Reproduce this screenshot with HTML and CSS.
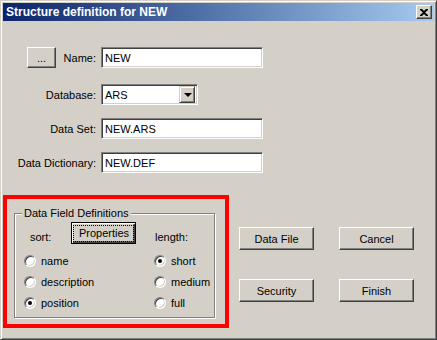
FILE: index.html
```html
<!DOCTYPE html>
<html lang="en">
<head>
    <meta charset="UTF-8">
    <title>Structure definition for NEW</title>
    <link rel="stylesheet" href="styles.css">
</head>
<body>
    <div class="window">
        <div class="titlebar">
            <span class="title">Structure definition for NEW</span>
            <span class="close">
                <svg width="8" height="7" viewBox="0 0 8 7"><path d="M0 0h2l2 2 2-2h2v1L5 3.5 8 6v1H6L4 5 2 7H0V6l3-2.5L0 1z" fill="#000"/></svg>
            </span>
        </div>

        <div class="fields">
            <div class="row">
                <div class="label"><button class="btn btn-dots">...</button><span>Name:</span></div>
                <div class="edit">NEW</div>
            </div>
            <div class="row row-db">
                <div class="label">Database:</div>
                <div class="combo">
                    <span class="combo-text">ARS</span>
                    <span class="combo-btn"><span class="arrow"></span></span>
                </div>
            </div>
            <div class="row row-next">
                <div class="label">Data Set:</div>
                <div class="edit">NEW.ARS</div>
            </div>
            <div class="row row-next">
                <div class="label">Data Dictionary:</div>
                <div class="edit">NEW.DEF</div>
            </div>
        </div>

        <div class="lower">
            <div class="highlight">
                <div class="group">
                    <div class="legend">Data Field Definitions</div>
                    <div class="group-head">
                        <span class="head-sort">sort:</span>
                        <button class="btn btn-default"><span class="focus">Properties</span></button>
                        <span class="head-length">length:</span>
                    </div>
                    <div class="radios">
                        <label class="radio"><span class="dot"></span>name</label>
                        <label class="radio"><span class="dot checked"></span>short</label>
                        <label class="radio"><span class="dot"></span>description</label>
                        <label class="radio"><span class="dot"></span>medium</label>
                        <label class="radio"><span class="dot checked"></span>position</label>
                        <label class="radio"><span class="dot"></span>full</label>
                    </div>
                </div>
            </div>

            <div class="actions">
                <button class="btn">Data File</button>
                <button class="btn">Cancel</button>
                <button class="btn">Security</button>
                <button class="btn">Finish</button>
            </div>
        </div>
    </div>
</body>
</html>
```

FILE: styles.css
```css
* {
    box-sizing: border-box;
}
body {
    margin: 0;
    font-family: "Liberation Sans", Arial, sans-serif;
    font-size: 11px;
    color: #000;
    background: #d4d0c8;
}
.window {
    width: 437px;
    height: 340px;
    background: #d4d0c8;
    border: 1px solid;
    border-color: #d4d0c8 #404040 #404040 #d4d0c8;
    box-shadow: inset 1px 1px #fff, inset -1px -1px #808080;
    padding: 2px;
}
.titlebar {
    height: 18px;
    display: flex;
    align-items: center;
    justify-content: space-between;
    background: linear-gradient(to right, #0a246a, #a6caf0);
    padding: 0 2px 0 3px;
}
.title {
    color: #fff;
    font-weight: bold;
    font-size: 12px;
}
.close {
    width: 16px;
    height: 14px;
    display: flex;
    align-items: center;
    justify-content: center;
    background: #d4d0c8;
    border: 1px solid;
    border-color: #fff #404040 #404040 #fff;
    box-shadow: inset -1px -1px #808080;
}

/* top fields */
.fields {
    margin-top: 26px;
}
.row {
    display: flex;
    align-items: center;
    height: 21px;
}
.row-db {
    margin-top: 16px;
}
.row-next {
    margin-top: 13px;
}
.label {
    width: 93px;
    margin-right: 5px;
    display: flex;
    align-items: center;
    justify-content: flex-end;
}
.edit, .combo {
    height: 21px;
    background: #fff;
    border: 1px solid;
    border-color: #808080 #fff #fff #808080;
    box-shadow: inset 1px 1px #404040, inset -1px -1px #d4d0c8;
    padding: 0 3px;
    display: flex;
    align-items: center;
}
.edit {
    width: 162px;
}
.combo {
    width: 97px;
    padding-right: 2px;
    justify-content: space-between;
}
.combo-btn {
    width: 16px;
    height: 17px;
    background: #d4d0c8;
    border: 1px solid;
    border-color: #d4d0c8 #404040 #404040 #d4d0c8;
    box-shadow: inset 1px 1px #fff, inset -1px -1px #808080;
    display: flex;
    align-items: center;
    justify-content: center;
}
.arrow {
    width: 0;
    height: 0;
    border-left: 4px solid transparent;
    border-right: 4px solid transparent;
    border-top: 4px solid #000;
    margin-left: 1px;
}

/* buttons */
.btn {
    font-family: inherit;
    font-size: 11px;
    color: #000;
    background: #d4d0c8;
    border: 1px solid;
    border-color: #fff #404040 #404040 #fff;
    box-shadow: inset -1px -1px #808080;
    padding: 0;
    border-radius: 0;
}
.btn-dots {
    width: 29px;
    height: 21px;
    margin-left: 24px;
    margin-right: auto;
}
.btn-default {
    width: 65px;
    height: 22px;
    border: 1px solid #000;
    box-shadow: inset 1px 1px #fff, inset -1px -1px #404040, inset -2px -2px #808080;
    display: flex;
    align-items: center;
    justify-content: center;
}
.focus {
    border: 1px dotted #000;
    padding: 1px 4px 1px 5px;
    line-height: 13px;
}

/* lower part */
.lower {
    display: flex;
    align-items: flex-start;
    margin-top: 22px;
}
.highlight {
    width: 226px;
    border: 4px solid #f00;
    padding: 14px 10px 6px 7px;
}
.group {
    height: 105px;
    border: 1px solid #808080;
    box-shadow: 1px 1px #fff, inset 1px 1px #fff;
}
.legend {
    width: fit-content;
    margin: -7px 0 0 7px;
    padding: 0 2px;
    line-height: 13px;
    background: #d4d0c8;
}
.group-head {
    display: flex;
    align-items: flex-end;
    margin-top: 2px;
    line-height: 13px;
}
.head-sort {
    width: 56px;
    padding-left: 15px;
}
.head-length {
    margin-left: 19px;
}
.radios {
    display: grid;
    grid-template-columns: 130px auto;
    grid-auto-rows: 21px;
    margin-top: 6px;
    padding-left: 9px;
}
.radio {
    display: flex;
    align-items: center;
}
.dot {
    width: 12px;
    height: 12px;
    margin-right: 5px;
    border-radius: 50%;
    background: #fff;
    border: 1px solid;
    border-color: #808080 #fff #fff #808080;
    box-shadow: inset 1px 1px #404040, inset -1px -1px #d4d0c8;
    display: flex;
    align-items: center;
    justify-content: center;
}
.dot.checked::after {
    content: "";
    width: 4px;
    height: 4px;
    border-radius: 50%;
    background: #000;
}
.actions {
    display: grid;
    grid-template-columns: 75px 75px;
    grid-auto-rows: 23px;
    column-gap: 25px;
    row-gap: 29px;
    margin: 32px 0 0 10px;
}
```
